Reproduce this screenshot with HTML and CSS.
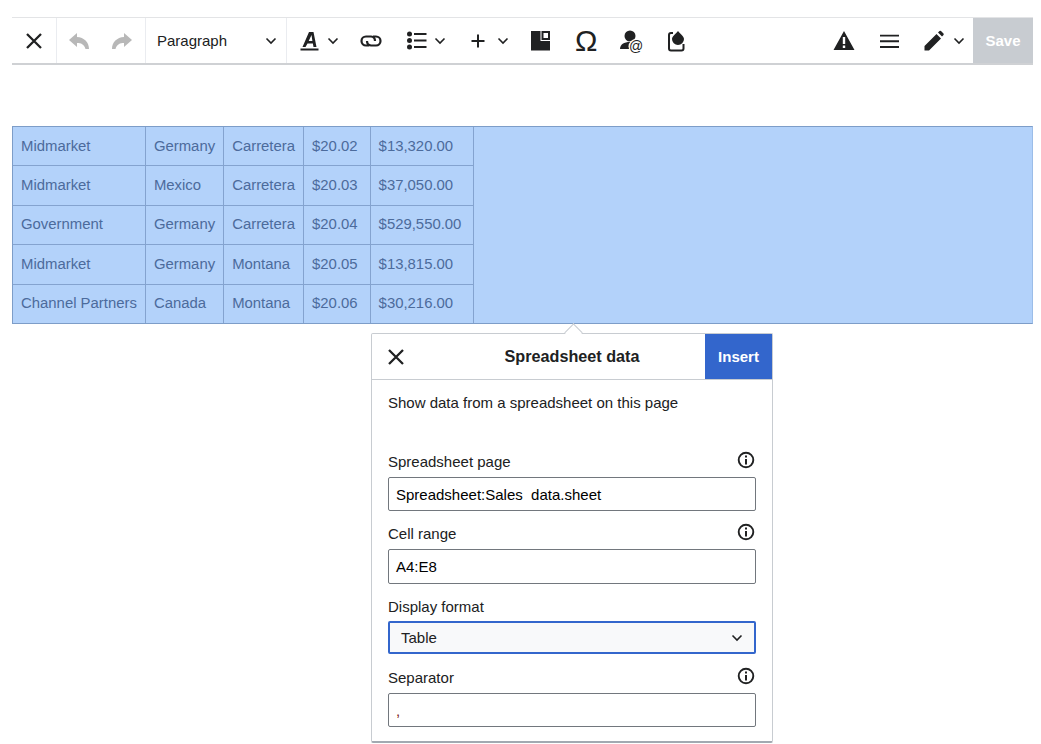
FILE: index.html
```html
<!DOCTYPE html>
<html lang="en">
<head>
<meta charset="utf-8">
<title>Spreadsheet data</title>
<link rel="stylesheet" href="styles.css">
</head>
<body>
<div class="toolbar">
  <div class="group close-group">
    <button class="tool"><svg class="i20" viewBox="0 0 20 20"><path class="st" d="M3 3l14 14M17 3L3 17"/></svg></button>
  </div>
  <div class="group history">
    <button class="tool undo"><svg class="i20" viewBox="0 0 20 20"><path class="fl-off" d="M8 2L0 9l8 7v-4c4 0 7 1 8.500 6H20C20 11 15 6.500 8 6z"/></svg></button>
    <button class="tool redo"><svg class="i20" viewBox="0 0 20 20"><path class="fl-off" d="M12 2l8 7-8 7v-4c-4 0-7 1-8.500 6H0C0 11 5 6.500 12 6z"/></svg></button>
  </div>
  <div class="group format">
    <span class="format-label">Paragraph</span>
    <svg class="chev" viewBox="0 0 12 12"><path class="st-thin" d="M1.500 3.500L6 8l4.500-4.500"/></svg>
  </div>
  <div class="group main-tools">
    <button class="tool tool-a"><svg class="i20" viewBox="0 0 20 20"><path class="fl" d="M9 1h4.500L16.500 16h-3l-.6-3.500H7.500L5.500 16h-3zm-.3 9h3.700l-.9-6z"/><rect class="fl" x="0.500" y="17.500" width="18" height="2"/></svg><svg class="chev" viewBox="0 0 12 12"><path class="st-thin" d="M1.500 3.500L6 8l4.500-4.500"/></svg></button>
    <button class="tool tool-link"><svg class="link-icon" viewBox="0 0 22 12"><path class="st-link" d="M9 10.500H6a4.500 4.500 0 0 1 0-9h5A4.500 4.500 0 0 1 15 6M13 1.500h3a4.500 4.500 0 0 1 0 9h-5A4.500 4.500 0 0 1 7 6"/></svg></button>
    <button class="tool tool-list"><svg class="i20" viewBox="0 0 20 20"><circle class="fl" cx="2.500" cy="3" r="2.500"/><circle class="fl" cx="2.500" cy="9.500" r="2.500"/><circle class="fl" cx="2.500" cy="16" r="2.500"/><path class="fl" d="M7 2h12.500v2H7zM7 8.500h12.500v2H7zM7 15h12.500v2H7z"/></svg><svg class="chev" viewBox="0 0 12 12"><path class="st-thin" d="M1.500 3.500L6 8l4.500-4.500"/></svg></button>
    <button class="tool tool-plus"><svg class="i20" viewBox="0 0 20 20"><path class="fl" d="M9 3.500h2V9h5.500v2H11v5.500H9V11H3.500V9H9z"/></svg><svg class="chev" viewBox="0 0 12 12"><path class="st-thin" d="M1.500 3.500L6 8l4.500-4.500"/></svg></button>
    <button class="tool tool-ref"><svg class="i20" viewBox="0 0 20 20"><path class="fl" d="M0 0h9.500v10H19v9.500H0z"/><path class="fl" fill-rule="evenodd" d="M10.500 0H19v9h-8.500zm2 2v5H17V2z"/></svg></button>
    <button class="tool tool-omega"><span class="omega">Ω</span></button>
    <button class="tool tool-mention"><svg class="i24" viewBox="0 0 24 24"><circle class="fl" cx="10" cy="7" r="5.500"/><path class="fl" d="M0 20c0-4.500 4-7 10-7 5 0 8 2 8 7z"/><circle class="at-bg" cx="16" cy="17.500" r="7.500"/><text class="at" x="16" y="22" text-anchor="middle">@</text></svg></button>
    <button class="tool tool-drop"><svg class="i20" viewBox="0 0 20 20"><path class="st-drop" d="M6 2H4a2 2 0 0 0-2 2v13.500a2 2 0 0 0 2 2h10.500a2 2 0 0 0 2-2V13"/><path class="fl" d="M11 0c2 3 6 5 6 8a6 6 0 0 1-12 0c0-3 4-5 6-8z"/></svg></button>
  </div>
  <div class="spacer"></div>
  <div class="group right-tools">
    <button class="tool tool-warn"><svg class="i22" viewBox="0 0 22 22"><path class="fl warn-shape" fill-rule="evenodd" d="M11 1L.500 20h21zM9.800 7h2.400v7H9.800zm0 8.500h2.400V18H9.800z"/></svg></button>
    <button class="tool tool-menu"><svg class="i20" viewBox="0 0 20 20"><path class="fl" d="M0 3.700h19v1.900H0zM0 9.300h19v1.900H0zM0 15h19v1.900H0z"/></svg></button>
    <button class="tool tool-pencil"><svg class="i20" viewBox="0 0 20 20"><path class="fl" d="M.500 19.500V15L12.500 3l4.500 4.500L5 19.500zM14 1.500L15.500 0q.8-.5 1.500 0l2.500 2.500q.5.700 0 1.500L18 5.500z"/></svg><svg class="chev" viewBox="0 0 12 12"><path class="st-thin" d="M1.500 3.500L6 8l4.500-4.500"/></svg></button>
  </div>
  <button class="save">Save</button>
</div>

<div class="document">
  <table class="sheet">
    <tbody>
      <tr><td>Midmarket</td><td>Germany</td><td>Carretera</td><td>$20.02</td><td>$13,320.00</td></tr>
      <tr><td>Midmarket</td><td>Mexico</td><td>Carretera</td><td>$20.03</td><td>$37,050.00</td></tr>
      <tr><td>Government</td><td>Germany</td><td>Carretera</td><td>$20.04</td><td>$529,550.00</td></tr>
      <tr><td>Midmarket</td><td>Germany</td><td>Montana</td><td>$20.05</td><td>$13,815.00</td></tr>
      <tr><td>Channel Partners</td><td>Canada</td><td>Montana</td><td>$20.06</td><td>$30,216.00</td></tr>
    </tbody>
  </table>
</div>

<div class="popup">
  <div class="arrow"></div>
  <header class="popup-head">
    <button class="popup-close"><svg class="i20" viewBox="0 0 20 20"><path class="st" d="M3 3l14 14M17 3L3 17"/></svg></button>
    <h2 class="popup-title">Spreadsheet data</h2>
    <button class="insert">Insert</button>
  </header>
  <div class="popup-body">
    <p class="intro">Show data from a spreadsheet on this page</p>
    <div class="field field-page">
      <div class="label-row"><label>Spreadsheet page</label><svg class="info" viewBox="0 0 18 18"><circle class="info-ring" cx="9" cy="9" r="7.300"/><rect class="fl" x="8" y="8" width="2" height="5.500"/><rect class="fl" x="8" y="4.500" width="2" height="2"/></svg></div>
      <div class="input">Spreadsheet:Sales&nbsp; data.sheet</div>
    </div>
    <div class="field field-range">
      <div class="label-row"><label>Cell range</label><svg class="info" viewBox="0 0 18 18"><circle class="info-ring" cx="9" cy="9" r="7.300"/><rect class="fl" x="8" y="8" width="2" height="5.500"/><rect class="fl" x="8" y="4.500" width="2" height="2"/></svg></div>
      <div class="input">A4:E8</div>
    </div>
    <div class="field field-format">
      <div class="label-row"><label>Display format</label></div>
      <div class="select"><span>Table</span><svg class="chev" viewBox="0 0 12 12"><path class="st-thin" d="M1.500 3.500L6 8l4.500-4.500"/></svg></div>
    </div>
    <div class="field field-sep">
      <div class="label-row"><label>Separator</label><svg class="info" viewBox="0 0 18 18"><circle class="info-ring" cx="9" cy="9" r="7.300"/><rect class="fl" x="8" y="8" width="2" height="5.500"/><rect class="fl" x="8" y="4.500" width="2" height="2"/></svg></div>
      <div class="input sep">,</div>
    </div>
  </div>
</div>
</body>
</html>
```
FILE: styles.css
```css
* { box-sizing: border-box; }
html, body { margin: 0; padding: 0; background: #fff; }
body {
  width: 1041px;
  height: 744px;
  overflow: hidden;
  position: relative;
  padding: 17px 8px 0 12px;
  font-family: "Liberation Sans", Arial, sans-serif;
  color: #202122;
}
button { font: inherit; border: 0; background: none; padding: 0; color: inherit; }
svg { display: block; flex: none; overflow: visible; }
.fl { fill: #202122; }
.fl-off { fill: #b8b8b8; }
.st { fill: none; stroke: #202122; stroke-width: 2.300; }
.st-thin { fill: none; stroke: #202122; stroke-width: 1.600; }
.st-link { fill: none; stroke: #202122; stroke-width: 2.200; }
.st-drop { fill: none; stroke: #202122; stroke-width: 2; }
.i20 { width: 20px; height: 20px; }
.i22 { width: 22px; height: 22px; }
.i24 { width: 24px; height: 24px; }
.chev { width: 12px; height: 12px; }
.link-icon { width: 22px; height: 12px; }

.toolbar {
  width: 1021px;
  height: 48px;
  display: flex;
  background: #fff;
  border-top: 1px solid #e3e4e6;
  border-bottom: 2px solid #cfd1d4;
}
.group { display: flex; align-items: center; height: 100%; }
.group + .group { border-left: 1px solid #eaecf0; }
.tool { display: flex; align-items: center; height: 100%; }
.close-group { width: 44px; justify-content: center; }
.history { width: 89px; justify-content: space-between; padding: 0 13px 0 12px; }
.format { width: 141px; padding: 0 9px 0 11px; justify-content: space-between; }
.format-label { font-size: 15px; color: #202122; }
.main-tools { padding-left: 13px; }
.tool-a { gap: 7px; }
.tool-link { margin-left: 21px; }
.tool-list { margin-left: 25px; gap: 7px; }
.tool-plus { margin-left: 22px; gap: 9px; }
.tool-ref { margin-left: 22px; }
.tool-omega { margin-left: 24px; }
.omega { display: block; width: 22px; text-align: center; font-size: 30px; line-height: 1; color: #202122; }
.tool-mention { margin-left: 23px; }
.at-bg { fill: #fff; }
.at { font-size: 14px; fill: #202122; font-family: "Liberation Sans", sans-serif; }
.tool-drop { margin-left: 23px; }
.spacer { flex: 1; }
.group.right-tools { border-left: 0; }
.tool-warn { margin-right: 2.500px; }
.tool-menu { margin-left: 23px; }
.tool-pencil { margin-left: 24px; gap: 9px; }
.save {
  margin-left: 8px;
  width: 60px;
  height: 45px;
  background: #c8ccd1;
  color: #fff;
  font-size: 15px;
  font-weight: 700;
}

.document { margin-top: 61px; }
.sheet {
  width: 1021px;
  height: 198px;
  background: #b3d2fa;
  display: block;
  border: 1px solid #7d9dc8;
  border-right-color: #9cbde8;
  font-size: 14.900px;
  color: #4c6b9c;
}
.sheet tbody { display: table; border-collapse: collapse; height: 196px; }
.sheet td { border: 1px solid #84a3cf; padding: 0 8px 1px; white-space: nowrap; }
.sheet tr:first-child td { border-top: 0; }
.sheet tr:last-child td { border-bottom: 0; }
.sheet td:first-child { border-left: 0; }
.sheet td:nth-child(4) { padding-right: 12px; }
.sheet td:nth-child(5) { padding-right: 12px; }

.popup {
  position: absolute;
  left: 371px;
  top: 333px;
  width: 402px;
  height: 410px;
  background: #fff;
  border: 1px solid #c8ccd1;
  border-bottom: 2px solid #a2a9b1;
  border-radius: 2px;
}
.arrow {
  position: absolute;
  left: 195px;
  top: -8px;
  width: 13px;
  height: 13px;
  transform: rotate(45deg);
  background: #fff;
  border-left: 1px solid #c8ccd1;
  border-top: 1px solid #c8ccd1;
}
.popup-head {
  position: relative;
  height: 46px;
  display: flex;
  align-items: center;
  border-bottom: 1px solid #c8ccd1;
}
.popup-close { width: 48px; display: flex; justify-content: center; }
.popup-title { flex: 1; margin: 0; padding-left: 19px; text-align: center; font-size: 16.200px; font-weight: 700; color: #202122; }
.insert {
  width: 67px;
  height: 45px;
  background: #3366cc;
  color: #fff;
  font-size: 15px;
  font-weight: 700;
}
.popup-body { padding: 14px 16px 0; font-size: 15px; }
.intro { margin: 0; font-size: 15px; line-height: 18px; color: #202122; }
.field { display: flex; flex-direction: column; }
.label-row { display: flex; justify-content: space-between; align-items: center; height: 18px; margin-bottom: 7px; }
.label-row label { font-size: 15px; color: #202122; }
.info { width: 18px; height: 18px; margin-top: -3px; margin-right: 1px; }
.info-ring { fill: none; stroke: #202122; stroke-width: 1.900; }
.field-page { margin-top: 40px; }
.field-range { margin-top: 13px; }
.field-format { margin-top: 13px; }
.field-format .label-row { margin-bottom: 6px; }
.field-sep { margin-top: 14px; }
.input {
  height: 34px;
  border: 1px solid #72777d;
  border-radius: 2px;
  padding: 0 7px;
  display: flex;
  align-items: center;
  font-size: 15px;
  color: #000;
}
.field-range .input { height: 35px; }
.sep { color: #7a2020; }
.select {
  height: 33px;
  border: 2px solid #3366cc;
  border-radius: 2px;
  background: #f8f9fa;
  padding: 0 11px;
  display: flex;
  align-items: center;
  justify-content: space-between;
  font-size: 15px;
  color: #202122;
}
```
